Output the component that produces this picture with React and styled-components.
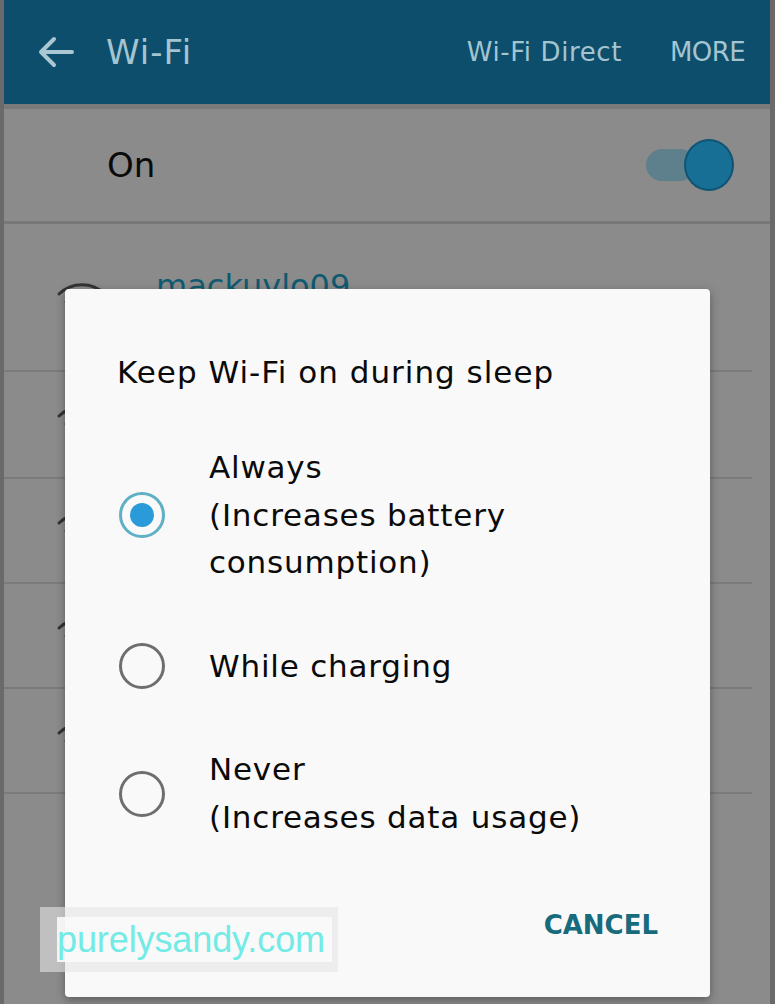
import React from "react"
import styled, { createGlobalStyle } from "styled-components"

const GlobalStyle = createGlobalStyle`
	html, body {
		margin: 0;
		padding: 0;
		background: #8b8b8b;
	}
`

const Screen = styled.div`
	position: relative;
	width: 775px;
	height: 1004px;
	overflow: hidden;
	box-sizing: border-box;
	border-left: 4px solid #6a6a6a;
	border-right: 5px solid #6a6a6a;
	background: #8b8b8b;
	font-family: "DejaVu Sans", "Noto Sans", sans-serif;
`

const Header = styled.header`
	height: 104px;
	display: flex;
	align-items: center;
	padding: 0 25px 0 34px;
	background: #0c4e6c;
	border-bottom: 5px solid #7a7a7a;
	color: #a4c4d0;
`

const Title = styled.h1`
	margin: 0 0 0 32px;
	font-size: 34px;
	letter-spacing: 1px;
	font-weight: 400;
`

const Actions = styled.div`
	margin-left: auto;
	display: flex;
	align-items: center;
	gap: 48px;
	font-size: 26px;
	letter-spacing: 0.6px;
`

const Action = styled.span`
	letter-spacing: ${(p) => (p.$caps ? "-0.6px" : "0.6px")};
`

const OnRow = styled.div`
	height: 112px;
	display: flex;
	align-items: center;
	padding: 0 36px 0 103px;
	border-bottom: 3px solid #787878;
	font-size: 34px;
	color: #0a0a0a;
`

const Toggle = styled.div`
	margin-left: auto;
	display: flex;
	align-items: center;
`

const Track = styled.div`
	width: 50px;
	height: 32px;
	margin-right: -12px;
	border-radius: 16px;
	background: #5e7f8c;
`

const Knob = styled.div`
	width: 46px;
	height: 48px;
	border-radius: 50%;
	background: #186f96;
	border: 2px solid #0f5473;
	position: relative;
`

const NetworkRow = styled.div`
	height: ${(p) => p.$height}px;
	display: flex;
	align-items: flex-start;
	padding-top: ${(p) => p.$pad}px;
	box-sizing: border-box;
	border-bottom: 2px solid #7b7b7b;
	margin-right: 18px;
`

const SignalIcon = styled.svg`
	width: 52px;
	height: 44px;
	margin: 0 48px 0 52px;
	flex-shrink: 0;
`

const NetworkName = styled.div`
	font-size: 32px;
	color: #0f5a70;
	margin-top: -13px;
`

const Dialog = styled.div`
	position: absolute;
	left: 61px;
	top: 289px;
	width: 645px;
	height: 708px;
	display: flex;
	flex-direction: column;
	background: #f9f9f9;
	border-radius: 4px;
	box-shadow: 0 3px 10px rgba(0, 0, 0, 0.35);
`

const DialogTitle = styled.h2`
	margin: 0;
	padding: 63px 0 0 52px;
	font-size: 31px;
	line-height: 40px;
	letter-spacing: 1px;
	font-weight: 400;
	color: #0a0a0a;
`

const OptionList = styled.div`
	margin-top: 24px;
	display: flex;
	flex-direction: column;
`

const Option = styled.label`
	display: flex;
	align-items: center;
	padding: 28px 0;
`

const Radio = styled.span`
	width: 46px;
	height: 46px;
	margin: 0 44px 0 54px;
	flex-shrink: 0;
	box-sizing: border-box;
	border-radius: 50%;
	border: 3px solid ${(p) => (p.$checked ? "#5fb0c4" : "#6e6e6e")};
	display: flex;
	align-items: center;
	justify-content: center;

	&::after {
		content: "";
		width: 24px;
		height: 24px;
		border-radius: 50%;
		background: #2a9bd8;
		display: ${(p) => (p.$checked ? "block" : "none")};
	}
`

const OptionText = styled.div`
	font-size: 31px;
	line-height: 47.5px;
	letter-spacing: 0.8px;
	color: #0a0a0a;
	white-space: pre-line;
`

const Footer = styled.div`
	margin-top: auto;
	display: flex;
	justify-content: flex-end;
	padding: 0 52px 54px 0;
`

const TextButton = styled.button`
	border: none;
	background: none;
	padding: 0;
	font-family: inherit;
	font-size: 26px;
	line-height: 36px;
	font-weight: 700;
	color: #176b7c;
`

const Watermark = styled.div`
	position: absolute;
	left: 36px;
	top: 907px;
	width: 298px;
	height: 65px;
	box-sizing: border-box;
	padding: 10px 6px 10px 23px;
	background: rgba(228, 228, 228, 0.6);
`

const WatermarkText = styled.div`
	height: 45px;
	display: flex;
	align-items: center;
	background: rgba(250, 250, 250, 0.9);
	margin-left: -6px;
	font-family: "Liberation Sans", Arial, sans-serif;
	font-size: 36px;
	color: #72ebe6;
	letter-spacing: -0.1px;
`

const BackArrow = () => (
	<svg width="36" height="32" viewBox="0 0 36 32" fill="none" stroke="#a9c8d3" strokeWidth="4" strokeLinecap="round" strokeLinejoin="round">
		<path d="M34 16H4M16 3L3 16l13 13" />
	</svg>
)

const Wifi = () => (
	<SignalIcon viewBox="0 0 52 44" fill="none" stroke="#333" strokeWidth="3" strokeLinecap="round">
		<path d="M3 14a33 33 0 0 1 46 0" />
		<path d="M10 22a23 23 0 0 1 32 0" />
		<path d="M17 30a13 13 0 0 1 18 0" />
		<circle cx="26" cy="38" r="2" fill="#333" />
	</SignalIcon>
)

const networks = [
	{ name: "mackuylo09", height: 148, pad: 56 },
	{ name: "", height: 107, pad: 30 },
	{ name: "", height: 105, pad: 30 },
	{ name: "", height: 105, pad: 30 },
	{ name: "", height: 105, pad: 30 },
]

const options = [
	{ label: "Always\n(Increases battery\nconsumption)", checked: true },
	{ label: "While charging", checked: false },
	{ label: "Never\n(Increases data usage)", checked: false },
]

const App = () => (
	<Screen>
		<GlobalStyle />
		<Header>
			<BackArrow />
			<Title>Wi-Fi</Title>
			<Actions>
				<Action>Wi-Fi Direct</Action>
				<Action $caps>MORE</Action>
			</Actions>
		</Header>
		<OnRow>
			On
			<Toggle>
				<Track />
				<Knob />
			</Toggle>
		</OnRow>
		{networks.map((n, i) => (
			<NetworkRow key={i} $height={n.height} $pad={n.pad}>
				<Wifi />
				<NetworkName>{n.name}</NetworkName>
			</NetworkRow>
		))}

		<Dialog>
			<DialogTitle>Keep Wi-Fi on during sleep</DialogTitle>
			<OptionList>
				{options.map((o) => (
					<Option key={o.label}>
						<Radio $checked={o.checked} />
						<OptionText>{o.label}</OptionText>
					</Option>
				))}
			</OptionList>
			<Footer>
				<TextButton>CANCEL</TextButton>
			</Footer>
		</Dialog>

		<Watermark>
			<WatermarkText>purelysandy.com</WatermarkText>
		</Watermark>
	</Screen>
)

export default App
